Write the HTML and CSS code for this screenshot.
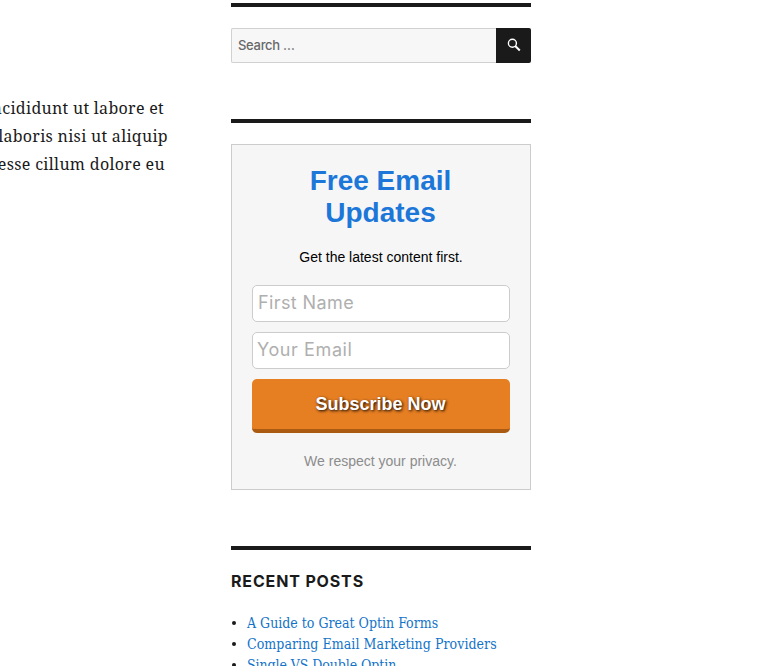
FILE: index.html
```html
<!DOCTYPE html>
<html lang="en">
<head>
<meta charset="utf-8">
<title>Free Email Updates</title>
<link rel="stylesheet" href="styles.css">
</head>
<body>
<div class="page">
  <main class="article">
    <p class="line"><span>incididunt ut labore et</span></p>
    <p class="line line-two"><span>laboris nisi ut aliquip</span></p>
    <p class="line line-three"><span>esse cillum dolore eu</span></p>
  </main>
  <aside class="sidebar">
    <section class="widget search-widget">
      <form class="search">
        <input class="search-field" type="search" placeholder="Search …" aria-label="Search">
        <button class="search-button" type="button" aria-label="Search">
          <svg width="14" height="14" viewBox="0 0 14 14" fill="none" stroke="#fff"><circle cx="5.4" cy="5.2" r="4" stroke-width="1.4"/><path d="M8.2 8l4.6 4.5" stroke-width="2"/></svg>
        </button>
      </form>
    </section>
    <section class="widget optin-widget">
      <form class="optin">
        <h2 class="optin-title"><span>Free Email</span><br><span>Updates</span></h2>
        <p class="optin-intro"><span>Get the latest content first.</span></p>
        <input class="field" type="text" placeholder="First Name" aria-label="First Name">
        <input class="field field-email" type="email" placeholder="Your Email" aria-label="Your Email">
        <button class="subscribe" type="button"><span>Subscribe Now</span></button>
        <p class="privacy"><span>We respect your privacy.</span></p>
      </form>
    </section>
    <section class="widget posts-widget">
      <h2 class="widget-title"><span>Recent Posts</span></h2>
      <ul class="posts">
        <li><a class="post-one">A Guide to Great Optin Forms</a></li>
        <li><a class="post-two">Comparing Email Marketing Providers</a></li>
        <li><a class="post-three">Single VS Double Optin</a></li>
      </ul>
    </section>
  </aside>
</div>
</body>
</html>
```
FILE: styles.css
```css
* { box-sizing: border-box; }
body { margin: 0; background: #fff; color: #1a1a1a; font-family: "DejaVu Serif Condensed", "DejaVu Serif", serif; overflow: hidden; }
h2, p, ul { margin: 0; padding: 0; }
.page { display: grid; grid-template-columns: 231px 300px; height: 666px; overflow: hidden; }
.article { padding-top: 94px; overflow: hidden; }
.line { display: flex; justify-content: flex-end; width: 164px; font: 16px/28px "Noto Serif", "DejaVu Serif Condensed", "DejaVu Serif", serif; font-stretch: condensed; letter-spacing: 0.3px; white-space: nowrap; }
.line-two { width: 168px; }
.line-three { width: 165px; letter-spacing: 0.33px; }
.sidebar { padding-top: 3px; }
.widget { border-top: 4px solid #1a1a1a; }
.search-widget { height: 116px; padding-top: 21px; }
.search { display: flex; height: 35px; }
.search-field { width: 265px; height: 35px; margin: 0; padding: 0 6px 1px; border: 1px solid #d1d1d1; border-right: 0; border-radius: 2px 0 0 2px; background: #f7f7f7; font: 500 13px "Inter", sans-serif; letter-spacing: -0.3px; outline: 0; }
.search-field::placeholder { color: #686868; opacity: 1; }
.search-button { display: flex; width: 35px; height: 35px; padding: 10px 0 0 11px; border: 0; border-radius: 0 2px 2px 0; background: #1a1a1a; }
.optin-widget { height: 427px; padding-top: 21px; }
.optin { height: 346px; padding: 20px; border: 1px solid #ccc; background: #f6f6f6; font-family: "Liberation Sans", Arial, sans-serif; text-align: center; }
.optin-title { padding-right: 1px; color: #1c77d9; font-size: 28px; line-height: 32px; }
.optin-intro { margin-top: 18px; height: 38px; color: #000; font-size: 14px; line-height: 20px; }
.field { display: block; width: 258px; height: 37px; margin: 0 0 10px; padding: 0 4px 2px 5px; border: 1px solid #ccc; border-radius: 5px; background: #fff; font: 18px "Inter", sans-serif; letter-spacing: 0.4px; }
.field-email { padding-left: 4px; letter-spacing: 0.6px; }
.field::placeholder { color: #afafaf; opacity: 1; }
.subscribe { display: block; width: 258px; height: 54px; padding: 0 1px 0 0; border: 0; border-bottom: 4px solid #ab5a12; border-radius: 5px; background: #e67e22; color: #fff; font: bold 18px/50px "Liberation Sans", Arial, sans-serif; text-shadow: 1px 1px 3px #000; }
.privacy { margin-top: 18px; padding-right: 1px; color: #8c8c8c; font-size: 14px; line-height: 20px; }
.posts-widget { padding-top: 21px; }
.widget-title { font: bold 16px/21px "Inter", sans-serif; letter-spacing: 0.85px; text-transform: uppercase; }
.posts { margin-top: 21px; padding-left: 16px; font-size: 14px; line-height: 21px; white-space: nowrap; list-style: none; }
.posts li::before { content: ""; display: inline-block; width: 4px; height: 4px; margin: 0 11px 3px -15px; border-radius: 50%; background: #1a1a1a; }
.posts a { color: #1273c9; }
.posts .post-two { letter-spacing: 0.06px; }
.posts .post-three { letter-spacing: -0.08px; }
```
